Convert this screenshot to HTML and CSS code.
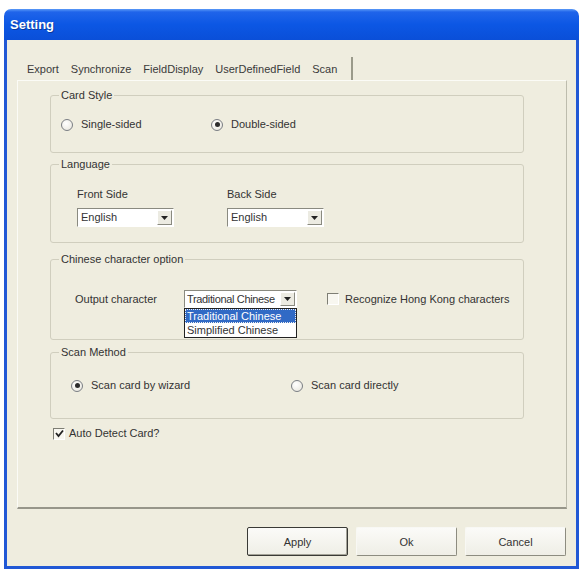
FILE: index.html
```html
<!DOCTYPE html>
<html lang="en">

<head>
    <meta charset="UTF-8">
    <title>Setting</title>
    <link rel="stylesheet" href="styles.css">
</head>

<body>
    <div class="window">
        <div class="titlebar">Setting</div>

        <div class="frame">
            <!-- Tabs -->
            <div class="tabs">
                <span class="tab">Export</span>
                <span class="tab">Synchronize</span>
                <span class="tab">FieldDisplay</span>
                <span class="tab">UserDefinedField</span>
                <span class="tab active">Scan</span>
            </div>

            <!-- Scan page -->
            <div class="page">
                <fieldset class="group card-style">
                    <legend>Card Style</legend>
                    <div class="row">
                        <label class="option wide"><span class="radio"></span>Single-sided</label>
                        <label class="option"><span class="radio checked"></span>Double-sided</label>
                    </div>
                </fieldset>

                <fieldset class="group language">
                    <legend>Language</legend>
                    <div class="row">
                        <div class="side">
                            <div class="side-label">Front Side</div>
                            <div class="select">
                                <span class="select-text">English</span>
                                <span class="arrow"><svg width="7" height="4" viewBox="0 0 7 4"><polygon points="0,0 7,0 3.5,4" fill="#222"/></svg></span>
                            </div>
                        </div>
                        <div class="side">
                            <div class="side-label">Back Side</div>
                            <div class="select">
                                <span class="select-text">English</span>
                                <span class="arrow"><svg width="7" height="4" viewBox="0 0 7 4"><polygon points="0,0 7,0 3.5,4" fill="#222"/></svg></span>
                            </div>
                        </div>
                    </div>
                </fieldset>

                <fieldset class="group chinese">
                    <legend>Chinese character option</legend>
                    <div class="row">
                        <span class="output-label">Output character</span>
                        <div class="select open">
                            <span class="select-text">Traditional Chinese</span>
                            <span class="arrow"><svg width="7" height="4" viewBox="0 0 7 4"><polygon points="0,0 7,0 3.5,4" fill="#222"/></svg></span>
                            <div class="dropdown">
                                <div class="dropdown-item selected">Traditional Chinese</div>
                                <div class="dropdown-item">Simplified Chinese</div>
                            </div>
                        </div>
                        <label class="check hk"><span class="checkbox"></span>Recognize Hong Kong characters</label>
                    </div>
                </fieldset>

                <fieldset class="group scan-method">
                    <legend>Scan Method</legend>
                    <div class="row">
                        <label class="option wizard"><span class="radio checked"></span>Scan card by wizard</label>
                        <label class="option"><span class="radio"></span>Scan card directly</label>
                    </div>
                </fieldset>

                <label class="check auto-detect"><span class="checkbox checked">
                    <svg width="9" height="9" viewBox="0 0 9 9"><polyline points="1,4 3.5,7 8,1.5" fill="none" stroke="#222" stroke-width="1.8"/></svg>
                </span>Auto Detect Card?</label>
            </div>

            <!-- Buttons -->
            <div class="buttons">
                <button class="btn default">Apply</button>
                <button class="btn">Ok</button>
                <button class="btn">Cancel</button>
            </div>
        </div>
    </div>
</body>

</html>
```

FILE: styles.css
```css
* {
    box-sizing: border-box;
}

body {
    margin: 0;
    background-color: #fff;
    font-family: "Liberation Sans", Arial, sans-serif;
    font-size: 11px;
    color: #333;
}

.window {
    width: 575px;
    margin: 9px 0 0 4px;
}

.titlebar {
    height: 31px;
    padding-left: 6px;
    display: flex;
    align-items: center;
    border-radius: 7px 7px 0 0;
    background: linear-gradient(#5b9af7 0, #1f64ea 3px, #0c57e4 50%, #0a4fd8 100%);
    color: #fff;
    font-size: 13px;
    font-weight: bold;
    text-shadow: 1px 1px 0 #0a3a9c;
}

.frame {
    height: 529px;
    padding-top: 17px;
    background-color: #efeddf;
    border: 3px solid #2158d5;
    border-top: none;
    display: flex;
    flex-direction: column;
}

/* tabs */
.tabs {
    display: flex;
    height: 23px;
    margin-left: 14px;
    align-items: center;
}

.tab {
    padding: 0 6px;
    color: #3a3a3a;
}

.tab.active {
    height: 23px;
    padding-right: 14px;
    display: flex;
    align-items: center;
    border-right: 2px solid #9a9a8a;
}

/* page */
.page {
    width: 550px;
    height: 429px;
    margin-left: 10px;
    padding: 8px 42px 0 32px;
    border: 1px solid #fbfbf6;
    border-right-color: #bdbcad;
    border-bottom: 2px solid #97968a;
}

.group {
    margin: 0;
    min-width: 0;
    padding-left: 0;
    padding-right: 0;
    border: 1px solid #d0cebe;
    border-radius: 3px;
}

.group legend {
    margin-left: 8px;
    padding: 0 2px;
    line-height: 13px;
}

.row {
    display: flex;
    align-items: center;
    line-height: 13px;
    white-space: nowrap;
}

.card-style {
    padding-top: 16px;
    padding-bottom: 21px;
}

.card-style .row {
    padding-left: 10px;
}

.language {
    margin-top: 5px;
    padding-top: 17px;
    padding-bottom: 15px;
}

.language .row {
    padding-left: 26px;
}

.chinese {
    margin-top: 10px;
    padding-top: 24px;
    padding-bottom: 31px;
}

.chinese .row {
    padding-left: 24px;
}

.scan-method {
    margin-top: 6px;
    padding-top: 20px;
    padding-bottom: 26px;
}

.scan-method .row {
    padding-left: 20px;
}

/* radios and checkboxes */
.option,
.check {
    display: flex;
    align-items: center;
    gap: 8px;
}

.option.wide {
    width: 150px;
}

.option.wizard {
    width: 220px;
}

.radio {
    width: 12px;
    height: 12px;
    border-radius: 50%;
    border: 1px solid #7a7e84;
    background: radial-gradient(circle at 40% 35%, #fff, #e6e4da);
    display: flex;
    align-items: center;
    justify-content: center;
}

.radio.checked::after {
    content: "";
    width: 5px;
    height: 5px;
    border-radius: 50%;
    background-color: #2c2c2c;
}

.checkbox {
    width: 12px;
    height: 12px;
    border: 1px solid;
    border-color: #7e7e74 #fff #fff #7e7e74;
    background-color: #f8f7f0;
    display: flex;
    align-items: center;
    justify-content: center;
}

.check.hk {
    margin-left: 30px;
    gap: 6px;
}

.check.auto-detect {
    margin: 8px 0 0 3px;
    gap: 4px;
    line-height: 13px;
}

/* selects */
.side {
    width: 150px;
}

.side-label {
    margin-bottom: 7px;
}

.select {
    position: relative;
    width: 97px;
    height: 19px;
    display: flex;
    border: 1px solid;
    border-color: #8a8a80 #fff #fff #8a8a80;
    background-color: #fff;
}

.select-text {
    flex: 1;
    padding-left: 3px;
    overflow: hidden;
    white-space: nowrap;
    line-height: 17px;
}

.arrow {
    width: 15px;
    margin: 1px;
    display: flex;
    align-items: center;
    justify-content: center;
    background-color: #ecebe2;
    border: 1px solid;
    border-color: #fff #8a8a80 #8a8a80 #fff;
}

.output-label {
    width: 109px;
}

.select.open {
    width: 113px;
    height: 18px;
}

.select.open .select-text {
    padding-left: 2px;
    line-height: 16px;
    letter-spacing: -0.35px;
}

.dropdown {
    position: absolute;
    top: 17px;
    left: -1px;
    width: 113px;
    border: 1px solid #222;
    background-color: #fff;
}

.dropdown-item {
    height: 14px;
    padding-left: 2px;
    line-height: 14px;
    white-space: nowrap;
}

.dropdown-item.selected {
    background-color: #316ac5;
    color: #fff;
    outline: 1px dotted #f0f0f0;
    outline-offset: -1px;
}

/* buttons */
.buttons {
    display: flex;
    justify-content: flex-end;
    gap: 8px;
    margin-top: 18px;
    padding-right: 10px;
}

.btn {
    width: 101px;
    height: 29px;
    font-family: inherit;
    font-size: 11px;
    color: #333;
    background: linear-gradient(#fbfbf8, #efeee6);
    border: 1px solid;
    border-color: #f8f8f4 #8d8c80 #8d8c80 #f8f8f4;
    border-radius: 2px;
    padding: 0;
}

.btn.default {
    border-color: #3a3a36;
    box-shadow: inset -1px -1px 0 #a4a398;
}
```
